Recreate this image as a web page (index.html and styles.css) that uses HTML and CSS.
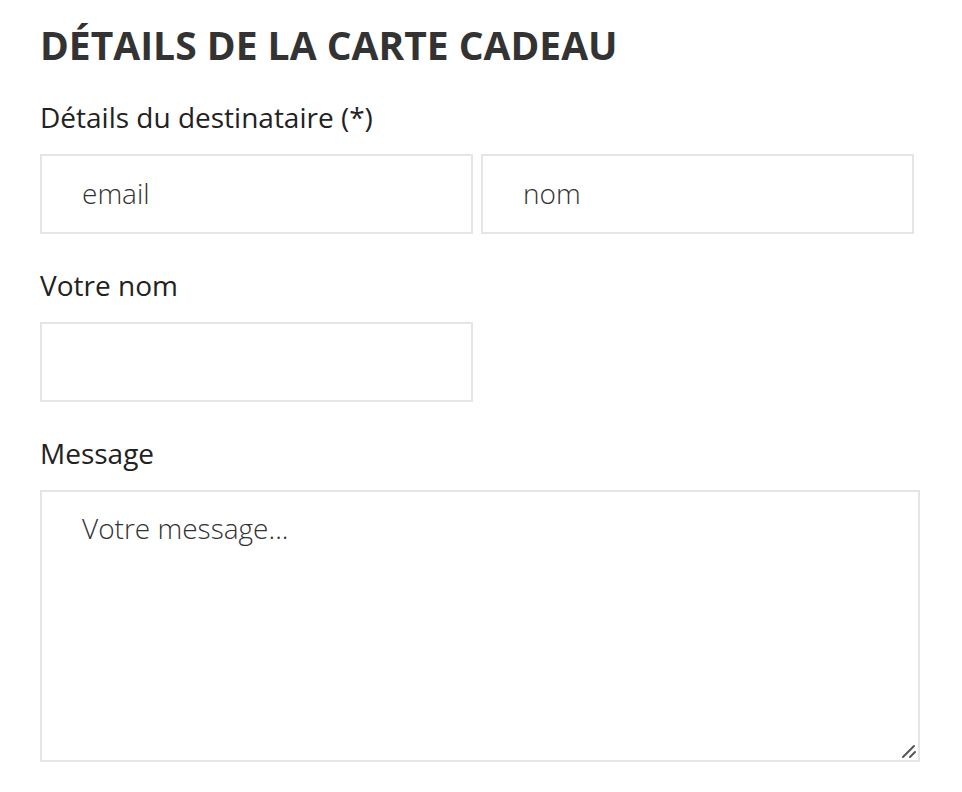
FILE: index.html
```html
<!DOCTYPE html>
<html lang="fr">
<head>
    <meta charset="UTF-8">
    <meta name="viewport" content="width=device-width, initial-scale=1.0">
    <title>Carte cadeau</title>
    <link rel="stylesheet" href="styles.css">
</head>
<body>

    <div class="gift-form">
        <h2>Détails de la carte cadeau</h2>

        <div class="field">
            <label>Détails du destinataire (*)</label>
            <div class="row">
                <input type="email" class="input" placeholder="email">
                <input type="text" class="input" placeholder="nom">
            </div>
        </div>

        <div class="field">
            <label for="sender">Votre nom</label>
            <div class="row">
                <input type="text" id="sender" class="input">
            </div>
        </div>

        <div class="field">
            <label for="message">Message</label>
            <div class="textarea-wrap">
                <textarea id="message" class="textarea" placeholder="Votre message..."></textarea>
                <svg class="grip" width="16" height="16" viewBox="0 0 16 16">
                    <line x1="2" y1="14" x2="13" y2="3" />
                    <line x1="9" y1="14" x2="14" y2="9" />
                </svg>
            </div>
        </div>
    </div>

</body>
</html>
```

FILE: styles.css
```css
/* General Styles */
* {
    margin: 0;
    padding: 0;
    box-sizing: border-box;
    font-family: "Open Sans", "Liberation Sans", sans-serif;
}

body {
    background-color: #fff;
    padding: 19px 0 0 40px;
}

.gift-form {
    width: 880px;
}

h2 {
    font-size: 39px;
    font-weight: 700;
    text-transform: uppercase;
    color: #333;
    line-height: 52px;
    margin-bottom: 27px;
}

/* Fields */
.field {
    margin-bottom: 32px;
}

.field label {
    display: block;
    font-size: 28px;
    color: #222;
    line-height: 38px;
    margin-bottom: 18px;
}

.row {
    display: flex;
    gap: 8px;
}

.input,
.textarea {
    width: 433px;
    height: 80px;
    border: 2px solid #e5e5e5;
    background: #fff;
    padding: 0 40px;
    font-size: 28px;
    font-weight: 300;
    color: #333;
    outline: none;
}

.input {
    padding-bottom: 2px;
}

.input::placeholder,
.textarea::placeholder {
    color: #333;
    opacity: 1;
}

/* Message box */
.textarea-wrap {
    position: relative;
    width: 880px;
}

.textarea {
    display: block;
    width: 880px;
    height: 272px;
    padding: 17px 40px;
    resize: none;
}

.grip {
    position: absolute;
    right: 3px;
    bottom: 3px;
    stroke: #555;
    stroke-width: 2;
    stroke-linecap: round;
}
```
